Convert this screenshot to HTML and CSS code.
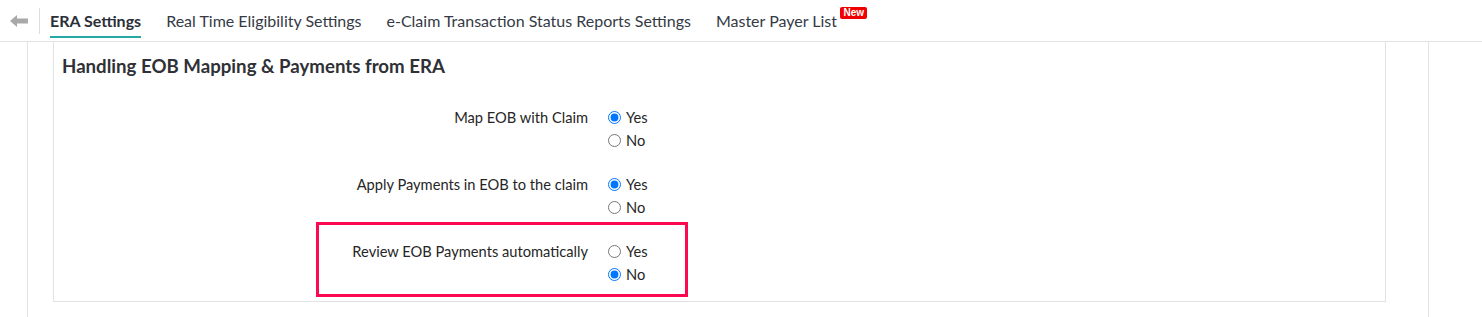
FILE: index.html
```html
<!DOCTYPE html>
<html lang="en">

<head>
    <meta charset="UTF-8">
    <meta name="viewport" content="width=device-width, initial-scale=1.0">
    <title>ERA Settings</title>
    <link rel="stylesheet" href="styles.css">
</head>

<body>
    <div class="topbar">
        <a class="back" href="#">
            <svg width="18" height="12" viewBox="0 0 18 12">
                <path d="M0 6 L7 0 L7 3.5 L18 3.5 L18 8.5 L7 8.5 L7 12 Z" fill="#a9a9a9" />
            </svg>
        </a>
        <span class="sep"></span>
        <ul class="tabs">
            <li class="active">ERA Settings</li>
            <li>Real Time Eligibility Settings</li>
            <li>e-Claim Transaction Status Reports Settings</li>
            <li>Master Payer List<span class="badge">New</span></li>
        </ul>
    </div>

    <div class="page">
        <div class="card">
            <h2>Handling EOB Mapping &amp; Payments from ERA</h2>

            <div class="row">
                <div class="label">Map EOB with Claim</div>
                <div class="options">
                    <label><input type="radio" name="map" checked> Yes</label>
                    <label><input type="radio" name="map"> No</label>
                </div>
            </div>

            <div class="row">
                <div class="label">Apply Payments in EOB to the claim</div>
                <div class="options">
                    <label><input type="radio" name="apply" checked> Yes</label>
                    <label><input type="radio" name="apply"> No</label>
                </div>
            </div>

            <div class="row highlight">
                <div class="label">Review EOB Payments automatically</div>
                <div class="options">
                    <label><input type="radio" name="review"> Yes</label>
                    <label><input type="radio" name="review" checked> No</label>
                </div>
                <div class="mark"></div>
            </div>
        </div>
    </div>
</body>

</html>
```

FILE: styles.css
```css
body {
    margin: 0;
    background-color: #fff;
    font-family: 'Lato', 'Liberation Sans', sans-serif;
    color: #2b2b2b;
    height: 317px;
    overflow: hidden;
}

.topbar {
    display: flex;
    align-items: center;
    height: 41px;
    border-bottom: 1px solid #e4e4e4;
    box-sizing: content-box;
}

.back {
    display: flex;
    align-items: center;
    margin-left: 10px;
    width: 18px;
    height: 41px;
}

.sep {
    width: 1px;
    height: 26px;
    margin-left: 11px;
    background-color: #dcdcdc;
}

.tabs {
    display: flex;
    list-style: none;
    margin: 0 0 0 10px;
    padding: 0;
    gap: 25px;
    height: 41px;
}

.tabs li {
    position: relative;
    display: flex;
    align-items: center;
    font-size: 16px;
    color: #353a45;
    box-sizing: border-box;
    border-bottom: 2px solid transparent;
    height: 38px;
    padding-top: 5px;
}

.tabs li.active {
    font-weight: 700;
    border-bottom-color: #26a9a4;
    color: #2b2f38;
}

.badge {
    position: absolute;
    right: -30px;
    top: 7px;
    background-color: #f00000;
    color: #fff;
    font-size: 10px;
    font-weight: 700;
    line-height: 12px;
    padding: 0 3px;
    border-radius: 2px;
    font-family: 'Liberation Sans', sans-serif;
}

.page {
    margin-left: 27px;
    width: 1402px;
    height: 275px;
    border-left: 1px solid #e2e2e2;
    border-right: 1px solid #e2e2e2;
    padding: 0 42px 0 25px;
    box-sizing: border-box;
}

.card {
    border: 1px solid #e2e2e2;
    border-top: none;
    padding: 12px 8px 15px;
}

.card h2 {
    margin: 0 0 28px;
    font-size: 18.67px;
    font-weight: 700;
    line-height: 24px;
    color: #2f3136;
}

.row {
    position: relative;
    display: flex;
    gap: 20px;
    font-size: 14.67px;
}

.row + .row {
    margin-top: 21px;
}

.label {
    width: 526px;
    text-align: right;
    line-height: 23px;
    color: #262626;
}

.options {
    display: flex;
    flex-direction: column;
}

.options label {
    display: flex;
    align-items: center;
    height: 23px;
    color: #262626;
}

.options input {
    margin: 0 5px 0 0;
    width: 13px;
    height: 13px;
}

.mark {
    position: absolute;
    left: 254px;
    top: -18px;
    width: 366px;
    height: 69px;
    border: 3px solid #fb0a52;
}
```
